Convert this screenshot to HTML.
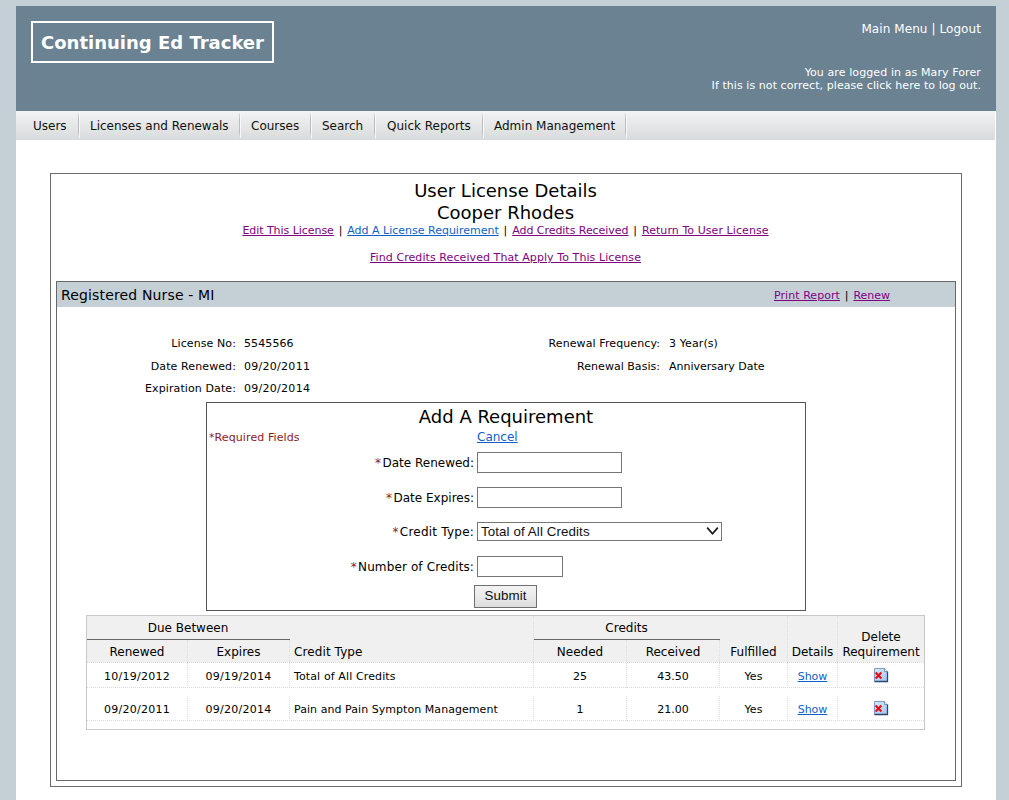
<!DOCTYPE html>
<html>
<head>
<meta charset="utf-8">
<title>Continuing Ed Tracker</title>
<style>
html,body{margin:0;padding:0;}
body{width:1009px;height:800px;overflow:hidden;background:#c4cfd6;font-family:"DejaVu Sans","Liberation Sans",sans-serif;font-size:11px;color:#000;position:relative;letter-spacing:0.1px;}
a{color:#800080;text-decoration:underline;}
a.b{color:#0f5fc8;}
.abs{position:absolute;white-space:nowrap;}
#page{position:absolute;left:16px;top:6px;width:980px;height:794px;background:#fff;}
#hdr{position:absolute;left:0;top:0;width:980px;height:105px;background:#6a8292;color:#fff;}
#logo{position:absolute;left:15px;top:15px;width:239px;height:38px;border:2px solid #fff;font-weight:bold;font-size:18px;line-height:40px;text-align:center;letter-spacing:0;}
#nav{position:absolute;left:0;top:105px;width:979px;height:29px;background:linear-gradient(#f3f4f4,#eaebec 30%,#e2e4e4 65%,#d7dadb);font-size:12px;color:#111;letter-spacing:0;}
#nav span{position:absolute;top:0;height:29px;line-height:30px;}
#nav i{position:absolute;top:2px;height:25px;width:1px;background:linear-gradient(#e0e0e0,#bdbdbd 25%,#bdbdbd 75%,#dcdcdc);border-right:1px solid #f8f8f8;}
#outer{position:absolute;left:34px;top:167px;width:910px;height:612px;border:1px solid #6b6b6b;}
#inner{position:absolute;left:40px;top:275px;width:898px;height:498px;border:1px solid #686868;}
#bar{position:absolute;left:41px;top:276px;width:898px;height:25px;background:#c4cfd6;}
.h1{font-size:18px;color:#000;}
.lbl{text-align:right;}
#form{position:absolute;left:190px;top:396px;width:598px;height:207px;border:1px solid #555;}
input.t{position:absolute;box-sizing:border-box;border:1px solid #767676;background:#fff;height:21px;padding:0;margin:0;}
.req{color:#8b1a1a;}
table#g{position:absolute;left:70px;top:609px;width:839px;border-collapse:collapse;font-size:11px;}
#grid{position:absolute;left:70px;top:609px;width:837px;height:113px;letter-spacing:0;border:1px solid #c8c8c8;font-size:12px;color:#000;}
#grid div{position:absolute;white-space:nowrap;}
#grid .hb{background:#f0f0f0;}
#grid .hd{text-align:center;}
#grid .ul{height:1px;background:#666;}
#grid .hl{left:0;width:837px;height:0;border-top:1px dotted #dadada;}
#grid .vl{width:0;border-left:1px dotted #dcdcdc;}
#grid .c{font-size:11px;line-height:14px;text-align:center;}
#grid .ic{position:absolute;}
.sp{letter-spacing:0;word-spacing:1.35px;white-space:pre;}
</style>
</head>
<body>
<div id="page">
  <div id="hdr">
    <div id="logo">Continuing Ed Tracker</div>
    <div class="abs" style="right:15px;top:16px;font-size:12px;letter-spacing:0.08px;">Main Menu | Logout</div>
    <div class="abs" style="right:15px;top:60px;font-size:11px;text-align:right;line-height:13px;">You are logged in as Mary Forer<br><span style="letter-spacing:0.07px">If this is not correct, please click here to log out.</span></div>
  </div>
  <div id="nav">
    <span style="left:17px">Users</span><i style="left:62px"></i>
    <span style="left:74px">Licenses and Renewals</span><i style="left:223px"></i>
    <span style="left:235px">Courses</span><i style="left:294px"></i>
    <span style="left:306px">Search</span><i style="left:358px"></i>
    <span style="left:371px">Quick Reports</span><i style="left:466px"></i>
    <span style="left:478px">Admin Management</span><i style="left:609px"></i>
  </div>
  <div id="outer"></div>
  <div id="inner"></div>
  <div id="bar"></div>

  <div class="abs h1" style="left:0;width:979px;text-align:center;top:174px;line-height:22px;letter-spacing:0;">User License Details<br>Cooper Rhodes</div>
  <div class="abs" style="left:0;width:979px;text-align:center;top:218px;line-height:14px;"><a href="#" style="letter-spacing:-0.05px">Edit This License</a><span class="sp"> | </span><a class="b" href="#" style="letter-spacing:0">Add A License Requirement</a><span class="sp"> | </span><a href="#" style="letter-spacing:-0.04px">Add Credits Received</a><span class="sp"> | </span><a href="#" style="letter-spacing:0.07px">Return To User License</a></div>
  <div class="abs" style="left:0;width:979px;text-align:center;top:245px;line-height:14px;"><a href="#" style="letter-spacing:0.08px">Find Credits Received That Apply To This License</a></div>

  <div class="abs" style="left:45px;top:280px;font-size:14px;line-height:18px;letter-spacing:0.15px;">Registered Nurse - MI</div>
  <div class="abs" style="left:758px;top:283px;line-height:14px;"><a href="#" style="letter-spacing:0.06px">Print Report</a><span class="sp"> | </span><a href="#" style="letter-spacing:0">Renew</a></div>

  <div class="abs lbl" style="left:70px;width:150px;top:331px;line-height:14px;">License No:</div>
  <div class="abs" style="left:228px;top:331px;line-height:14px;">5545566</div>
  <div class="abs lbl" style="left:70px;width:150px;top:354px;line-height:14px;">Date Renewed:</div>
  <div class="abs" style="left:228px;top:354px;line-height:14px;letter-spacing:0.28px;">09/20/2011</div>
  <div class="abs lbl" style="left:70px;width:150px;top:376px;line-height:14px;">Expiration Date:</div>
  <div class="abs" style="left:228px;top:376px;line-height:14px;letter-spacing:0.28px;">09/20/2014</div>
  <div class="abs lbl" style="left:444px;width:200px;top:331px;line-height:14px;">Renewal Frequency:</div>
  <div class="abs" style="left:653px;top:331px;line-height:14px;">3 Year(s)</div>
  <div class="abs lbl" style="left:444px;width:200px;top:354px;line-height:14px;letter-spacing:0.03px;">Renewal Basis:</div>
  <div class="abs" style="left:653px;top:354px;line-height:14px;letter-spacing:0;">Anniversary Date</div>

  <div id="form"></div>
  <div class="abs h1" style="left:190px;width:600px;text-align:center;top:400px;line-height:22px;letter-spacing:0;">Add A Requirement</div>
  <div class="abs req" style="left:193px;top:425px;line-height:14px;">*Required Fields</div>
  <div class="abs" style="left:461px;top:424px;font-size:12px;letter-spacing:0;line-height:15px;"><a class="b" href="#">Cancel</a></div>

  <div class="abs lbl" style="left:258px;width:200px;top:449px;font-size:12px;letter-spacing:0;line-height:16px;"><span class="req" style="letter-spacing:1.4px">*</span>Date Renewed:</div>
  <input class="t" style="left:461px;top:446px;width:145px;">
  <div class="abs lbl" style="left:258px;width:200px;top:484px;font-size:12px;letter-spacing:0;line-height:16px;"><span class="req" style="letter-spacing:1.4px">*</span>Date Expires:</div>
  <input class="t" style="left:461px;top:481px;width:145px;">
  <div class="abs lbl" style="left:258px;width:200px;top:518px;font-size:12px;letter-spacing:0.22px;line-height:16px;"><span class="req" style="letter-spacing:1.4px">*</span>Credit Type:</div>
  <div class="abs" style="left:461px;top:516px;width:243px;height:17px;border:1px solid #767676;background:#fff;font-family:'Liberation Sans',sans-serif;font-size:13.33px;line-height:17px;color:#111;letter-spacing:0.1px;"><span style="padding-left:3px">Total of All Credits</span>
    <svg style="position:absolute;right:2px;top:3px" width="13" height="10" viewBox="0 0 13 10"><path d="M1.2 1.6 L6.5 7.8 L11.8 1.6" fill="none" stroke="#1a1a1a" stroke-width="1.7"/></svg>
  </div>
  <div class="abs lbl" style="left:258px;width:200px;top:553px;font-size:12px;letter-spacing:0.12px;line-height:16px;"><span class="req" style="letter-spacing:1.4px">*</span>Number of Credits:</div>
  <input class="t" style="left:461px;top:550px;width:86px;">
  <div class="abs" style="left:458px;top:579px;width:61px;height:21px;border:1px solid #707070;background:linear-gradient(#f3f3f3,#ebebeb 45%,#dddddd);font-family:'Liberation Sans',sans-serif;font-size:13.33px;line-height:20px;letter-spacing:0.1px;text-align:center;color:#111;">Submit</div>

  <!-- requirements grid -->
  <div id="grid">
    <div class="hb" style="left:0;top:0;width:837px;height:46px;"></div>
    <div class="ul" style="left:0;top:23px;width:203px;"></div>
    <div class="ul" style="left:447px;top:23px;width:186px;"></div>
    <div class="hd" style="left:0;top:0;width:202px;height:23px;line-height:24px;">Due Between</div>
    <div class="hd" style="left:447px;top:0;width:185px;height:23px;line-height:24px;">Credits</div>
    <div class="hd" style="left:0px;top:25px;width:100px;height:21px;line-height:23px;">Renewed</div>
    <div class="hd" style="left:101px;top:25px;width:101px;height:21px;line-height:23px;">Expires</div>
    <div class="hd" style="left:207px;top:25px;height:21px;line-height:23px;text-align:left;letter-spacing:0.1px;">Credit Type</div>
    <div class="hd" style="left:447px;top:25px;width:92px;height:21px;line-height:23px;">Needed</div>
    <div class="hd" style="left:540px;top:25px;width:92px;height:21px;line-height:23px;">Received</div>
    <div class="hd" style="left:633px;top:25px;width:67px;height:21px;line-height:23px;">Fulfilled</div>
    <div class="hd" style="left:701px;top:25px;width:49px;height:21px;line-height:23px;">Details</div>
    <div class="hd" style="left:751px;top:14px;width:86px;height:32px;line-height:15px;">Delete<br>Requirement</div>
    <div class="hl" style="top:46px;"></div>
    <div class="hl" style="top:71px;"></div>
    <div class="hl" style="top:104px;"></div>
    <div class="vl" style="left:100px;top:24px;height:48px;"></div>
    <div class="vl" style="left:202px;top:24px;height:48px;"></div>
    <div class="vl" style="left:446px;top:0px;height:72px;"></div>
    <div class="vl" style="left:539px;top:24px;height:48px;"></div>
    <div class="vl" style="left:632px;top:24px;height:48px;"></div>
    <div class="vl" style="left:700px;top:0px;height:72px;"></div>
    <div class="vl" style="left:750px;top:0px;height:72px;"></div>
    <div class="vl" style="left:100px;top:80px;height:25px;"></div>
    <div class="vl" style="left:202px;top:80px;height:25px;"></div>
    <div class="vl" style="left:446px;top:80px;height:25px;"></div>
    <div class="vl" style="left:539px;top:80px;height:25px;"></div>
    <div class="vl" style="left:632px;top:80px;height:25px;"></div>
    <div class="vl" style="left:700px;top:80px;height:25px;"></div>
    <div class="vl" style="left:750px;top:80px;height:25px;"></div>
    <div class="c" style="left:0px;top:54px;width:100px;letter-spacing:0.28px;">10/19/2012</div>
    <div class="c" style="left:101px;top:54px;width:101px;letter-spacing:0.28px;">09/19/2014</div>
    <div class="c" style="left:207px;top:54px;text-align:left;letter-spacing:0.12px;">Total of All Credits</div>
    <div class="c" style="left:447px;top:54px;width:92px;">25</div>
    <div class="c" style="left:540px;top:54px;width:92px;">43.50</div>
    <div class="c" style="left:633px;top:54px;width:67px;">Yes</div>
    <div class="c" style="left:701px;top:54px;width:49px;"><a class="b" href="#">Show</a></div>
    <svg class="ic" style="left:786px;top:51px;" width="16" height="16" viewBox="0 0 16 16"><use href="#del"/></svg>
    <div class="c" style="left:0px;top:87px;width:100px;letter-spacing:0.28px;">09/20/2011</div>
    <div class="c" style="left:101px;top:87px;width:101px;letter-spacing:0.28px;">09/20/2014</div>
    <div class="c" style="left:207px;top:87px;text-align:left;letter-spacing:0.05px;">Pain and Pain Sympton Management</div>
    <div class="c" style="left:447px;top:87px;width:92px;">1</div>
    <div class="c" style="left:540px;top:87px;width:92px;">21.00</div>
    <div class="c" style="left:633px;top:87px;width:67px;">Yes</div>
    <div class="c" style="left:701px;top:87px;width:49px;"><a class="b" href="#">Show</a></div>
    <svg class="ic" style="left:786px;top:84px;" width="16" height="16" viewBox="0 0 16 16"><use href="#del"/></svg>
  </div>
  <svg width="0" height="0" style="position:absolute"><defs>
    <linearGradient id="pg" x1="0" y1="0" x2="1" y2="1"><stop offset="0" stop-color="#d8ebfb"/><stop offset="1" stop-color="#9cc6f0"/></linearGradient>
    <g id="del">
      <path d="M1.5 1.5 H11.5 L14.5 4.5 V14.5 H1.5 Z" fill="url(#pg)" stroke="#7d9cc8" stroke-width="1"/>
      <path d="M14.5 4.5 V14.5 H1.5" fill="none" stroke="#2f4670" stroke-width="1.3"/>
      <path d="M11.5 1.5 V4.5 H14.5" fill="#f2f8fe" stroke="#5f7fae" stroke-width="0.8"/>
      <path d="M2.6 5.6 L8.4 11.6 M8.4 5.6 L2.6 11.6" stroke="#e60f0f" stroke-width="2.1" fill="none"/>
    </g>
  </defs></svg>
</div>
</body>
</html>
